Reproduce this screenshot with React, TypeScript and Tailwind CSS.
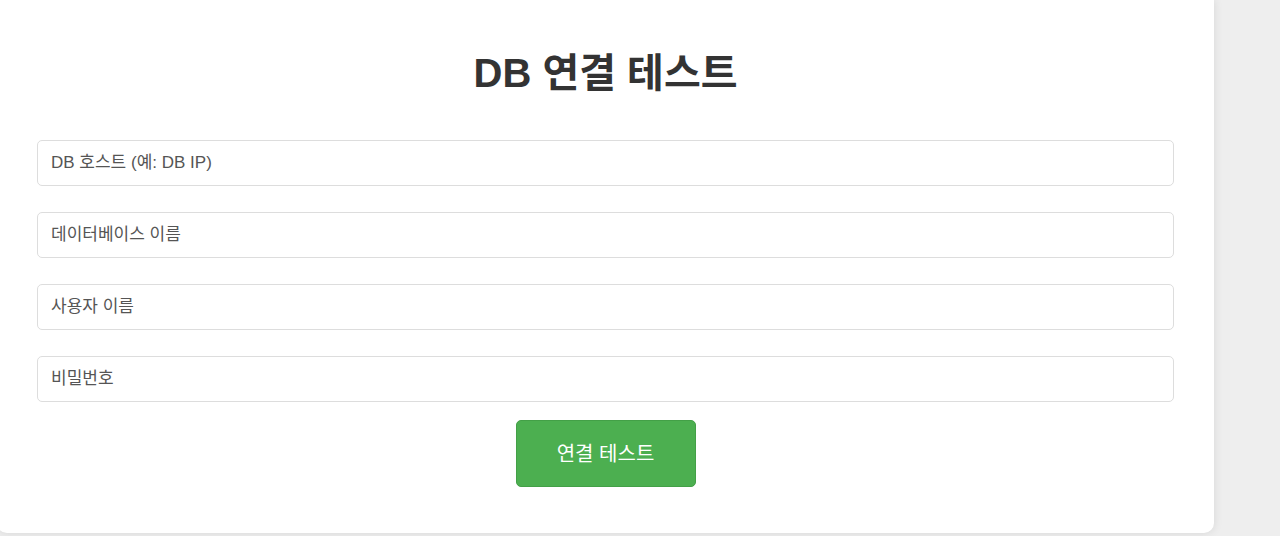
import React from 'react';

const FIELDS = [
  { name: 'host', placeholder: 'DB 호스트 (예: DB IP)', type: 'text' },
  { name: 'database', placeholder: '데이터베이스 이름', type: 'text' },
  { name: 'user', placeholder: '사용자 이름', type: 'text' },
  { name: 'password', placeholder: '비밀번호', type: 'password' },
];

export default function App() {
  return (
    <div
      className="min-h-[536px] w-full overflow-hidden bg-[#eeeeee]"
      style={{ fontFamily: '"Liberation Sans", Arial, "Noto Sans CJK KR", sans-serif' }}
    >
      <div className="-ml-[3px] w-[1217px] rounded-b-[10px] bg-white px-10 pt-[50px] pb-[46px] shadow-[0_0_10px_rgba(0,0,0,0.1)]">
        {/* Title */}
        <h1 className="text-center text-[40px] font-bold leading-[46px] text-[#333]">DB 연결 테스트</h1>

        {/* Form */}
        <form className="mt-[44px] flex flex-col" onSubmit={(e) => e.preventDefault()}>
          {FIELDS.map((f, i) => (
            <input
              key={f.name}
              name={f.name}
              type={f.type}
              placeholder={f.placeholder}
              className={
                'h-[46px] w-full rounded-[5px] border border-[#dddddd] bg-white px-[13px] text-[17px] text-[#333] outline-none placeholder:text-[#555] ' +
                (i < FIELDS.length - 1 ? 'mb-[26px]' : 'mb-[18px]')
              }
            />
          ))}
          <div className="flex justify-center">
            <button
              type="submit"
              className="h-[67px] w-[180px] rounded-[5px] border border-[#43a047] bg-[#4caf50] text-[20px] text-white"
            >
              연결 테스트
            </button>
          </div>
        </form>
      </div>
    </div>
  );
}
